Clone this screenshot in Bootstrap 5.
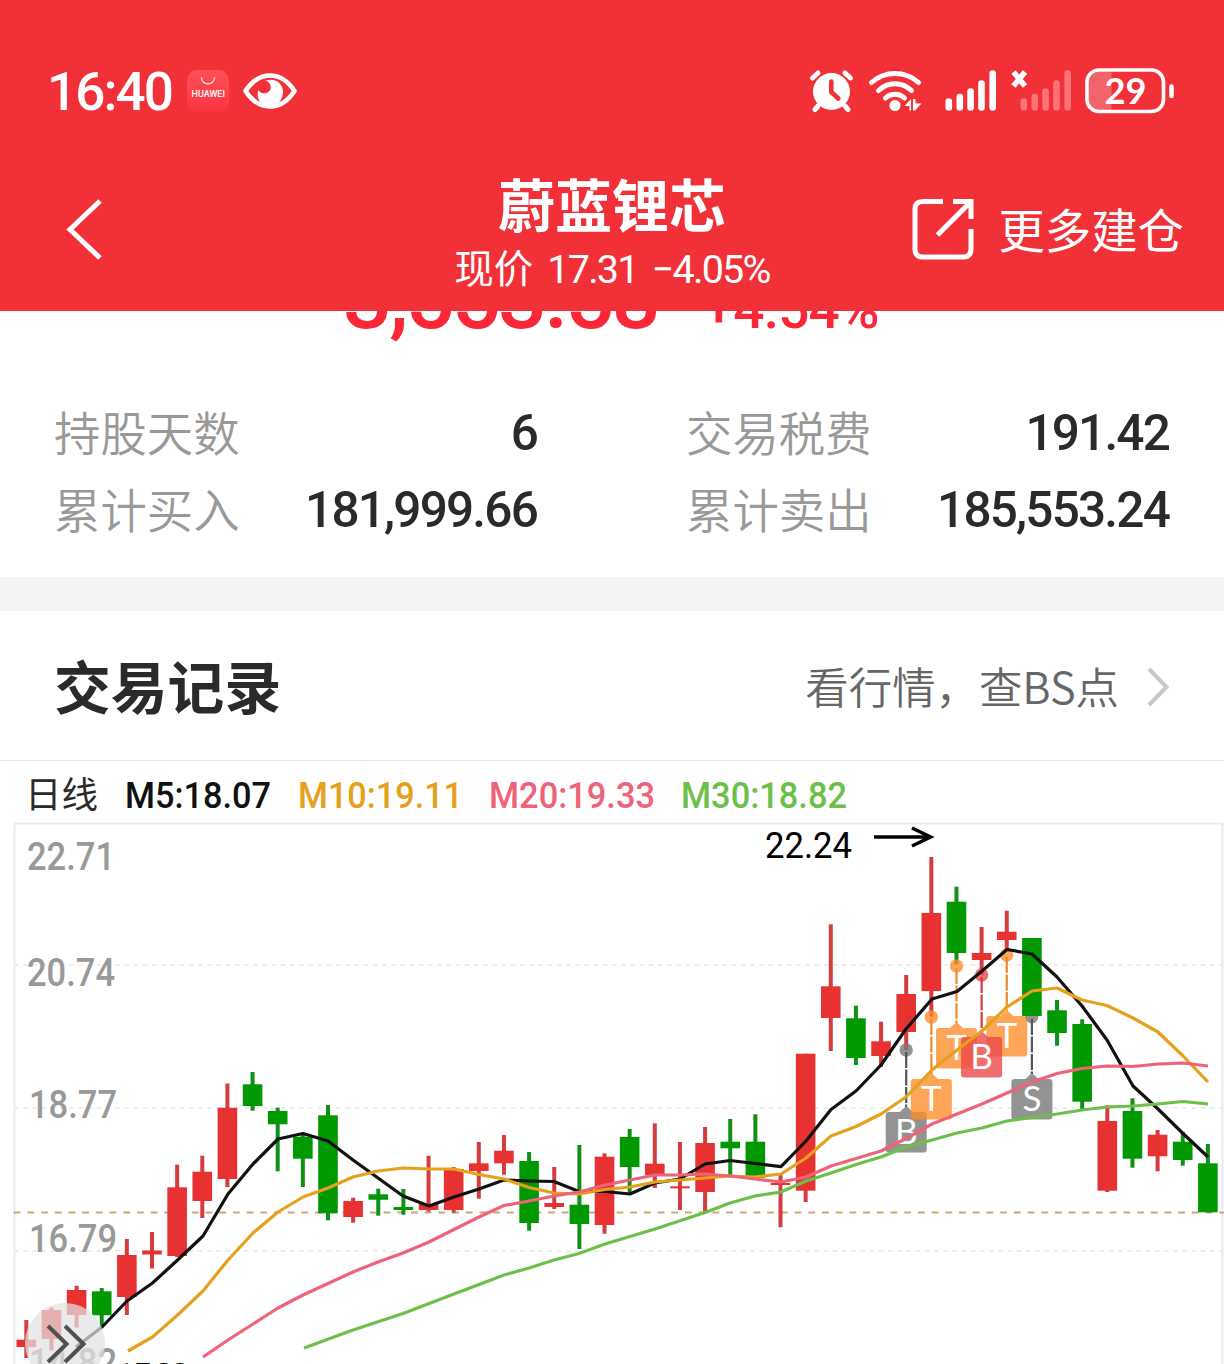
<!DOCTYPE html>
<html lang="zh-CN">
<head>
<meta charset="utf-8">
<meta name="viewport" content="width=device-width, initial-scale=1">
<title>蔚蓝锂芯</title>
<link href="https://cdn.jsdelivr.net/npm/bootstrap@5.3.0/dist/css/bootstrap.min.css" rel="stylesheet">
<style>
  body{width:1224px;height:1364px;overflow:hidden;background:#fff;color:#2a2a2a;font-family:Roboto,"Noto Sans CJK SC",sans-serif}
  svg{display:block;flex:none}
  .topbar{height:311px;background:#f13038;color:#fff;position:relative;z-index:2}
  .statusbar{height:162px;padding:20px 50px 0 47px}
  .clock{font-size:53px;line-height:1;font-weight:500;letter-spacing:-1.9px;width:140px;padding-top:3px}
  .eye-icon{margin-left:14px}
  .titlebar{display:grid;grid-template-columns:1fr 340px 1fr;height:149px}
  .back-icon{margin:34px 0 0 60px}
  .share-icon{margin:36px 24px 0 0}
  .stockname{font-size:57px;line-height:64px;font-weight:700;margin-top:8px;font-family:"Noto Sans CJK SC",sans-serif}
  .quote{font-size:39.5px;line-height:48px;margin-top:12px}
  .quote-num{letter-spacing:-1.75px;margin-left:14px}
  .more{font-size:46.4px;line-height:60px;font-weight:400;margin-top:36px;font-family:"Noto Sans CJK SC",sans-serif}
  .summary{height:266px}
  .profit{height:72px;overflow:hidden;color:#fb2638;font-weight:500}
  .profit-in{margin-top:-56px;padding-left:343px}
  .gain{font-size:86px;line-height:88px;letter-spacing:-2.7px;width:361px}
  .rate{font-size:55px;line-height:88px;letter-spacing:-.8px;padding-top:10px}
  .plus{font-size:74px;line-height:0;font-weight:400;margin:0 -6px}
  .stats{display:grid;grid-template-columns:483px 483px;column-gap:149px;padding:13px 54px 0}
  .stat{height:77.5px}
  .stat-label{font-size:46.4px;color:#999;font-weight:350;margin-top:-8px;font-family:"Noto Sans CJK SC",sans-serif}
  .stat-num{font-size:49.5px;font-weight:500;letter-spacing:-1.8px;margin-top:-4px}
  .gap-band{height:34px;background:#f4f4f4}
  .sec-head{height:150px;padding:0 54px;border-bottom:1px solid #e9e9e9}
  .sec-title{font-size:56.8px;font-weight:700;line-height:1;margin-top:-3px;font-family:"Noto Sans CJK SC",sans-serif}
  .sec-link{font-size:43.4px;color:#666;line-height:1;font-weight:350;font-family:"Noto Sans CJK SC",sans-serif}
  .sec-arrow{margin-left:27px;margin-top:2px}
  .legend-row{height:61px;padding-left:25px}
</style>
</head>
<body>
<header class="topbar">
  <div class="statusbar d-flex align-items-center">
    <div class="clock">16:40</div>
    <svg width="42" height="42" viewBox="0 0 42 42">
      <defs><linearGradient id="hw" x2="0" y2="1"><stop stop-color="#ff5057"/><stop offset="1" stop-color="#fb3440"/></linearGradient></defs>
      <rect width="42" height="42" rx="10" fill="url(#hw)"/>
      <path d="M14.500 7.500a6.500 6.500 0 0 0 13 0" fill="none" stroke="#fff" stroke-width="1.200"/>
      <text x="4.500" y="27" font-size="8.300" font-weight="500" fill="#fff" textLength="33.500" lengthAdjust="spacingAndGlyphs">HUAWEI</text>
    </svg>
    <svg class="eye-icon" width="54" height="42" viewBox="0 0 54 42">
      <path d="M2.500 21C9 11 17 5.500 27 5.500S45 11 51.500 21C45 31 37 36.500 27 36.500S9 31 2.500 21Z" fill="none" stroke="#fff" stroke-width="4.600" stroke-linejoin="round"/>
      <path d="M22.500 10.500C34 7.500 40.500 15 40 22.500C39.500 29 36 33 33 36H21C15.500 32 13.500 26 15.300 20C18 25.500 27.500 24 27.800 17.500C27.800 14 25.500 11.500 22.500 10.500Z" fill="#fff"/>
    </svg>
    <svg class="ms-auto" width="366" height="48" viewBox="0 0 366 48" fill="none" stroke-linecap="round">
      <g transform="translate(2 3)" stroke="#fff">
        <circle cx="21.500" cy="21.500" r="18.500" fill="#fff" stroke="none"/>
        <path d="M2.500 8 8 3M40.500 8 35 3" stroke-width="5"/>
        <path d="M8 36 5 39.500M35 36 38 39.500" stroke-width="5"/>
        <path d="M21.300 11.500V22l7 6.500" stroke="#f13038" stroke-width="4.600"/>
      </g>
      <g stroke="#fff" stroke-width="5">
        <path d="M63.500 15.500C77 3.500 97 3.500 110.500 15.500M70.500 23.500C80 14.500 94 14.500 103.500 23.500M77.500 31C83 26 91 26 96.500 31"/>
        <circle cx="87" cy="38.500" r="5.500" fill="#fff" stroke="none"/>
        <path d="M96.500 39l6.500-7v11.500h-1.500v-4.500ZM105 32h2.500v4.500h6l-6.500 7h-2Z" fill="#fff" stroke="none"/>
      </g>
      <g stroke="#fff" stroke-width="6.600"><path d="M140.800 34.500V40.500M151.800 30V40.500M162.600 24.500V40.500M173.500 16.500V40.500M184.700 6.500V40.500"/></g>
      <g stroke="#ff7277" stroke-width="6.600"><path d="M215.800 34.500V40.500M226.800 30V40.500M237.600 24.500V40.500M248.500 16.500V40.500M259.700 6.500V40.500"/></g>
      <path d="M205.500 5 217 19M217 5 205.500 19" stroke="#fff" stroke-width="5.500" stroke-linecap="butt"/>
      <path d="M303.500 4.500V44H293a12 12 0 0 1-12-12V16.500a12 12 0 0 1 12-12Z" fill="#f4636a"/>
      <rect x="279" y="3" width="76.500" height="41.500" rx="12" stroke="#fff" stroke-width="3.600"/>
      <path d="M363.500 19.500V29" stroke="#fff" stroke-width="4.500"/>
      <text x="296.500" y="37" font-family="Lato" font-weight="700" font-size="37" fill="#fff" textLength="42" lengthAdjust="spacingAndGlyphs">29</text>
    </svg>
  </div>
  <div class="titlebar">
    <div class="d-flex"><svg class="back-icon" width="50" height="68" viewBox="0 0 50 68"><path d="M40 5 10 33.500 40 62" fill="none" stroke="#fff" stroke-width="5"/></svg></div>
    <div class="text-center text-nowrap"><div class="stockname">蔚蓝锂芯</div><div class="quote">现价<span class="quote-num">17.31</span><span class="quote-num">−4.05%</span></div></div>
    <div class="d-flex align-items-start justify-content-end pe-4 me-3">
      <svg class="share-icon" width="62" height="62" viewBox="0 0 62 62" fill="none" stroke="#fff" stroke-width="5">
        <path d="M31 3.500H11Q3 3.500 3 11V51Q3 59 11 59H51Q59 59 59 51V31M41 3.500H59V21M58 4.500 25.500 37"/>
      </svg>
      <div class="more text-nowrap">更多建仓</div>
    </div>
  </div>
</header>
<main>
  <section class="summary">
    <div class="profit"><div class="profit-in d-flex"><div class="gain">3,553.58</div><div class="rate"><span class="plus">+</span>4.54%</div></div></div>
    <div class="stats">
      <div class="stat d-flex align-items-center justify-content-between"><span class="stat-label">持股天数</span><span class="stat-num">6</span></div>
      <div class="stat d-flex align-items-center justify-content-between"><span class="stat-label">交易税费</span><span class="stat-num">191.42</span></div>
      <div class="stat d-flex align-items-center justify-content-between"><span class="stat-label">累计买入</span><span class="stat-num">181,999.66</span></div>
      <div class="stat d-flex align-items-center justify-content-between"><span class="stat-label">累计卖出</span><span class="stat-num">185,553.24</span></div>
    </div>
  </section>
  <div class="gap-band"></div>
  <section>
    <div class="sec-head d-flex align-items-center justify-content-between">
      <div class="sec-title">交易记录</div>
      <div class="d-flex align-items-center"><span class="sec-link">看行情，查BS点</span>
        <svg class="sec-arrow" width="24" height="42" viewBox="0 0 24 42"><path d="M3 3 20.500 21 3 39" fill="none" stroke="#c8c8c8" stroke-width="4"/></svg></div>
    </div>
    <div class="legend-row d-flex">
      <svg width="1190" height="60" viewBox="25 761 1190 60">
        <text x="25" y="808" font-size="36.500" fill="#2a2a2a">日线</text>
        <g font-weight="500" font-size="37">
          <text x="125" y="808" fill="#111" textLength="146" lengthAdjust="spacingAndGlyphs">M5:18.07</text>
          <text x="298" y="808" fill="#e5a11c" textLength="165" lengthAdjust="spacingAndGlyphs">M10:19.11</text>
          <text x="489" y="808" fill="#ee6378" textLength="166" lengthAdjust="spacingAndGlyphs">M20:19.33</text>
          <text x="681" y="808" fill="#6cc04a" textLength="166" lengthAdjust="spacingAndGlyphs">M30:18.82</text>
        </g>
      </svg>
    </div>
    <svg id="chart" width="1224" height="542" viewBox="0 822 1224 542"></svg>
  </section>
</main>
<script src="https://cdn.jsdelivr.net/npm/bootstrap@5.3.0/dist/js/bootstrap.bundle.min.js"></script>
<script>
// Each candle: direction, high, body top, body bottom, low
const candles=[
['r',1320,1339.7,1347,1358],['r',1307.5,1310,1339,1350.5],['r',1285.7,1290,1315,1327.5],['g',1288,1291.3,1315.3,1327],
['r',1239,1255,1297,1315],['r',1232,1250.5,1254.5,1268.5],['r',1164.7,1187.3,1256,1257],['r',1155.7,1171.7,1201,1218],
['r',1083.5,1107.7,1179,1187],['g',1072,1084.3,1106,1110.7],['g',1107.7,1111,1124.3,1171.3],['g',1135,1136.7,1158.7,1187],
['g',1105,1115.3,1213.3,1220.3],['r',1197.7,1201,1217,1222.7],['g',1188.7,1194.3,1199.7,1215.7],['g',1189,1207,1210,1214.7],
['r',1155.7,1204,1210,1211.7],['r',1167,1169,1210,1212.7],['r',1142,1163.3,1171,1198.7],['r',1135,1150.7,1163.3,1174.7],
['g',1152,1161,1223,1230.7],['r',1167,1203,1207,1209],['g',1145,1204.7,1224,1249],['r',1153.3,1156.7,1225,1233.7],
['g',1129,1137,1167,1193.3],['r',1123.3,1163.7,1175,1188],['r',1142,1186.3,1188.3,1210],['r',1127,1143,1192,1211.7],
['g',1119,1141.7,1148.3,1175],['g',1114.3,1141.7,1177.7,1177.7],['r',1173.3,1183,1185,1227.3],['r',1053.7,1053.7,1190.7,1202],
['r',924.3,986.3,1018,1051],['g',1005.7,1018.3,1058,1065],['r',1021.7,1041.3,1056,1067],['r',975,994,1032,1050],
['r',857,913,991,1016.7],['g',886.7,901.7,953,964.3],['r',927,953,960,975],['r',910.7,931.7,940,950],
['g',938,938,1016,1016],['g',1000,1010.3,1033,1045.7],['g',1019.3,1024,1101.7,1109.3],['r',1105.3,1121,1190.7,1192],
['g',1098.3,1111,1158.7,1167.7],['r',1130,1134.7,1156.3,1171.3],['g',1131.7,1141.7,1160,1165.7],['g',1144,1163.3,1212.3,1212.3]];
const X=i=>26.3+25.14*i, col={r:'#e83131',g:'#019901'}, wick={r:'#d63c3e',g:'#109018'};
const orange='rgba(255,140,40,.78)',grey='rgba(120,120,120,.8)',red='rgba(236,72,72,.8)';
let s='<path d="M14.500 1364V823.500H1222.500V1364" fill="none" stroke="#eaeaea" stroke-width="2"/>';
for(const y of [965,1108,1251])s+=`<path d="M14 ${y}H1222" stroke="#e8e8e8" stroke-width="1.600" stroke-dasharray="4.600 4.600"/>`;
s+='<path d="M13.700 1212.600H1224" stroke="#c9a878" stroke-width="2" stroke-dasharray="6.850 6.850"/>';
[['22.71',27,869.5],['20.74',27,985.5],['18.77',29,1117.5],['16.79',29,1251.5],['14.82',29,1376]].forEach(t=>
 s+=`<text x="${t[1]}" y="${t[2]}" font-size="39" font-weight="500" fill="#999" textLength="88" lengthAdjust="spacingAndGlyphs">${t[0]}</text>`);
candles.forEach((c,i)=>{
 s+=`<path d="M${X(i)} ${c[1]}V${c[4]}" stroke="${wick[c[0]]}" stroke-width="4"/><rect x="${X(i)-9.8}" y="${c[2]}" width="19.600" height="${c[3]-c[2]}" fill="${col[c[0]]}"/>`;});
// Trade markers: candle index, dot y, flag top y, letter, colour, stem colour
[[35,1050,1112,'B',grey,'#555'],[36,1017,1079,'T',orange,'#ee8a2c'],[37,966,1028,'T',orange,'#ee8a2c'],[39,955,1016,'T',orange,'#ee8a2c'],[38,975,1037,'B',red,'#cf3b40'],[40,1017,1079,'S',grey,'#555']].forEach(([i,d,y,l,c,st])=>{
 const x=X(i);
 s+=(i==40?`<path d="M${x-6.5} 1016a6.500 7.500 0 0 0 13 0z" fill="${c}"/>`:`<circle cx="${x}" cy="${d}" r="6.700" fill="${c}"/>`)
 +`<path d="M${x} ${d+2}V${y-5}" stroke="${st}" stroke-width="2.200" stroke-dasharray="16 1.500"/>`
 +`<path d="M${x-6.5} ${y}L${x} ${y-6}L${x+6.5} ${y}H${x+17.5}q3 0 3 3V${y+37.5}q0 3-3 3H${x-17.5}q-3 0-3-3V${y+3}q0-3 3-3Z" fill="${c}"/>`
 +`<text x="${x}" y="${y+31.5}" font-family="Lato" font-size="35" fill="#fff" text-anchor="middle">${l}</text>`;});
const line=(a,c)=>s+=`<polyline points="${a}" fill="none" stroke="${c}" stroke-width="3.200" stroke-linejoin="round"/>`;
line('76,1347 102,1327 127,1301 152.5,1283 177.6,1260 203,1236 228,1194 253,1164 278,1139 303,1133.5 328,1141 353,1160 378,1178 403,1196 429,1206 454,1197 479,1189 504,1180 529,1181 554,1181.5 579,1191.5 605,1191.5 630,1194 655,1183 680,1179 705,1164 730,1160.5 755,1163.5 781,1166.7 806,1141 831,1109.5 856,1091 881,1065 906,1029 932,999 957,991.5 982,971 1007,949.5 1032,954 1057,977 1082,1006 1107,1040 1133,1086 1158,1109 1183,1133.5 1208,1157','#111');
line('128,1351 152.5,1337 177.6,1315 203,1291 228,1260 253,1233 278,1212 303,1197 328,1188 353,1177 378,1171 403,1168 429,1169 454,1169 479,1174.5 504,1179 529,1187.5 554,1193 579,1194 605,1189.5 630,1187 655,1182 680,1180 705,1178 730,1176 755,1177 781,1174 806,1158 831,1136 856,1126.5 881,1114 906,1097 932,1070 957,1050 982,1031 1007,1007 1032,991 1057,988 1082,1000 1107,1005.5 1133,1018 1158,1032 1183,1056 1208,1082','#e5a11c');
line('203,1357 228,1340 253,1324 278,1308 303,1295 353,1272 378,1262 403,1253 429,1242 479,1217 504,1205.5 529,1201 554,1196 579,1192 605,1185 630,1180 655,1175 680,1175 705,1174 730,1176 755,1179 781,1182 806,1177 831,1166 881,1151 906,1138.5 932,1124 957,1114 982,1104 1007,1093 1032,1082 1057,1073.5 1082,1068.5 1107,1066 1133,1066.5 1158,1064 1183,1063 1208,1066','#ee6378');
line('304,1348 353,1330 403,1313.5 454,1294 504,1275 529,1268 554,1260 579,1253.5 605,1244 655,1229 705,1212.5 730,1203 755,1196 781,1192 806,1181 831,1173 856,1164.5 881,1157 906,1147 932,1140 957,1133 982,1128 1007,1121 1032,1117.5 1057,1114 1082,1110 1107,1107 1133,1106 1158,1104 1183,1101.5 1208,1104','#6cc04a');
s+='<text x="765" y="857.500" font-size="36.500" fill="#000" textLength="87" lengthAdjust="spacingAndGlyphs">22.24</text><path d="M874 837H930" stroke="#000" stroke-width="3.600"/><path d="M912 828 930.500 837 912 846" fill="none" stroke="#000" stroke-width="3.600"/>';
s+='<text x="115" y="1388.500" font-size="36" fill="#000" textLength="75">15.08</text>';
s+='<circle cx="65" cy="1343" r="40" fill="#e2e2e2" fill-opacity=".72"/><path d="M48 1326 66.500 1344 48 1362M65 1326 83.500 1344 65 1362" fill="none" stroke="#505050" stroke-width="4"/>';
document.getElementById('chart').innerHTML=s;
</script>
</body>
</html>
